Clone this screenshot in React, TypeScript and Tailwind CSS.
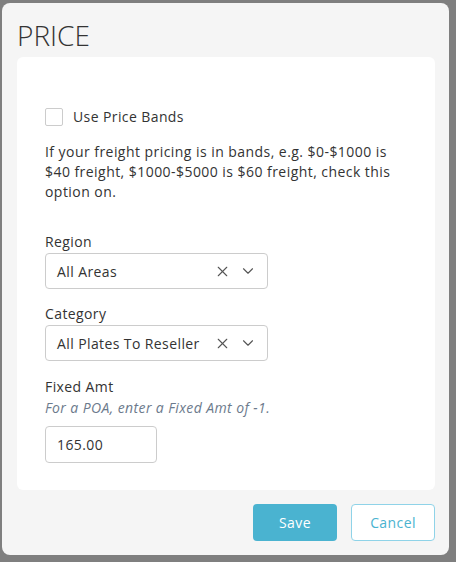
import { X, ChevronDown } from 'lucide-react';

const font = { fontFamily: '"Open Sans", "Liberation Sans", sans-serif' };

function SelectBox({ value }: { value: string }) {
  return (
    <div className="mt-px flex h-[36px] w-[223px] items-center rounded border border-[#cccccc] bg-white pl-[11px] pr-[10px]">
      <span className="flex-1 text-[14px] tracking-[0.4px] text-[#333333]">{value}</span>
      <X className="h-[17px] w-[17px] text-[#555555]" strokeWidth={1.5} />
      <ChevronDown className="ml-[8px] h-[18px] w-[18px] text-[#555555]" strokeWidth={1.5} />
    </div>
  );
}

export default function App() {
  return (
    <div className="h-[562px] w-[456px] overflow-hidden bg-[#7f7f7f] pl-[2px] pt-[3px]" style={font}>
      <div className="flex h-[552px] w-[447px] flex-col rounded-lg bg-[#f5f5f5] pl-[15px] pr-[14px]">
        <h1 className="mt-[14px] h-[40px] text-[28px] font-light leading-[36px] text-[#333333]">PRICE</h1>

        <div className="h-[433px] rounded-md bg-white px-[28px] pt-[49px]">
          <label className="flex items-center gap-[10px]">
            <span className="h-[18px] w-[18px] rounded-[2px] border border-[#cccccc] bg-white" />
            <span className="text-[14px] font-medium tracking-[0.4px] text-[#333333]">Use Price Bands</span>
          </label>

          <p className="mt-[15px] text-[14px] leading-[20px] tracking-[0.45px] text-[#333333]">
            If your freight pricing is in bands, e.g. $0-$1000 is $40 freight, $1000-$5000 is $60 freight, check this option on.
          </p>

          <div className="mt-[30px]">
            <div className="text-[14px] font-medium leading-[20px] tracking-[0.4px] text-[#333333]">Region</div>
            <SelectBox value="All Areas" />
          </div>

          <div className="mt-[15px]">
            <div className="text-[14px] font-medium leading-[20px] tracking-[0.4px] text-[#333333]">Category</div>
            <SelectBox value="All Plates To Reseller" />
          </div>

          <div className="mt-[16px]">
            <div className="text-[14px] font-medium leading-[20px] tracking-[0.4px] text-[#333333]">Fixed Amt</div>
            <div className="text-[14px] italic leading-[22px] tracking-[0.4px] text-[#6c7a8c]">For a POA, enter a Fixed Amt of -1.</div>
            <input
              defaultValue="165.00"
              className="mt-[7px] h-[37px] w-[112px] rounded border border-[#cccccc] px-[11px] text-[14px] tracking-[0.4px] text-[#333333] outline-none"
              style={font}
            />
          </div>
        </div>

        <div className="mt-[14px] flex justify-end gap-[14px]">
          <button className="h-[37px] w-[84px] rounded bg-[#4ab3d0] text-[14px] font-medium tracking-[0.4px] text-white">Save</button>
          <button className="h-[37px] w-[84px] rounded border border-[#8fd3e8] bg-white text-[14px] tracking-[0.4px] text-[#4ab3d0]">Cancel</button>
        </div>
      </div>
    </div>
  );
}
